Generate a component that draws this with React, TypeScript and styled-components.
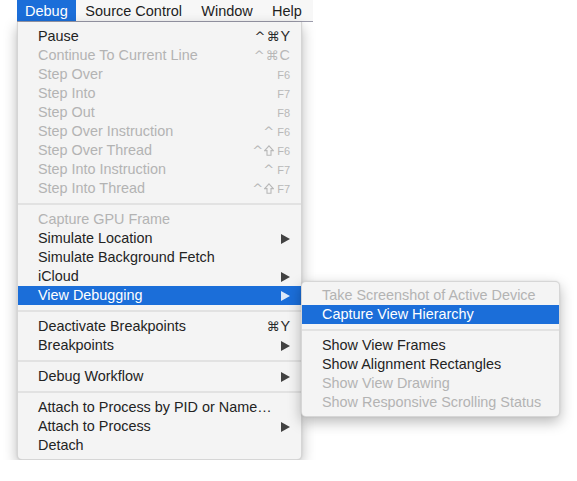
import React from 'react';
import styled, { createGlobalStyle, css } from 'styled-components';

const GlobalStyle = createGlobalStyle`
  html, body {
    margin: 0;
    padding: 0;
    background: #ffffff;
  }
  body {
    font-family: 'Liberation Sans', Arial, sans-serif;
    -webkit-font-smoothing: antialiased;
  }
`;

const Page = styled.div`
  padding-left: 17px;
  width: 560px;
`;

const MenuBar = styled.div`
  display: flex;
  width: 296px;
  height: 22px;
  background: #f7f7f7;
  border-bottom: 1px solid #9c9cac;
  box-sizing: border-box;
`;

const BarItem = styled.div<{ $active?: boolean }>`
  display: flex;
  align-items: center;
  padding: 0 9.6px;
  font-size: 14.5px;
  color: #1e1e1e;
  &:first-child {
    padding: 0 8px;
  }
  ${({ $active }) =>
    $active &&
    css`
      background: #1b6ed9;
      color: #ffffff;
    `}
`;

const Menu = styled.div<{ $attached?: boolean }>`
  position: relative;
  display: flex;
  flex-direction: column;
  background: #f4f4f4;
  padding: 5px 0 4px;
  border: 1px solid rgba(0, 0, 0, 0.12);
  border-radius: ${({ $attached }) => ($attached ? '0 0 5px 5px' : '5px')};
  box-shadow: 0 5px 14px rgba(0, 0, 0, 0.28), 0 0 2px rgba(0, 0, 0, 0.1);
  box-sizing: border-box;
`;

const MainMenu = styled(Menu)`
  width: 285px;
  border-top: none;
`;

const SubMenu = styled(Menu)`
  position: absolute;
  top: -5px;
  left: 100%;
  width: 259px;
  padding: 4px 0;
  z-index: 2;
`;

const Row = styled.div<{ $disabled?: boolean; $selected?: boolean; $indent: number }>`
  position: relative;
  display: flex;
  align-items: center;
  justify-content: space-between;
  height: 19px;
  padding: 0 11px 0 ${({ $indent }) => $indent}px;
  font-size: 14.4px;
  line-height: 19px;
  color: ${({ $disabled }) => ($disabled ? '#b3b3b3' : '#232323')};
  white-space: nowrap;
  ${({ $selected }) =>
    $selected &&
    css`
      background: #1b6ed9;
      color: #ffffff;
    `}
`;

const Separator = styled.div`
  height: 12px;
  display: flex;
  align-items: center;
  &::after {
    content: '';
    flex: 1;
    height: 2px;
    background: #e2e2e2;
  }
`;

const Shortcut = styled.span<{ $disabled?: boolean }>`
  display: flex;
  align-items: center;
  color: ${({ $disabled }) => ($disabled ? '#b8b8b8' : '#2a2a2a')};
  font-size: 14.4px;
`;

const Mods = styled.span`
  font-family: 'DejaVu Sans', 'Liberation Sans', sans-serif;
  font-size: 13px;
  letter-spacing: 1px;
`;

const ShiftIcon = styled.svg`
  width: 10px;
  height: 11px;
  margin: 0 1px 0 0;
  fill: none;
  stroke: currentColor;
  stroke-width: 1.1;
`;

const FKey = styled.span`
  font-size: 11px;
  margin-left: 2px;
  padding-top: 2px;
`;

const Arrow = styled.svg`
  width: 9px;
  height: 10px;
  fill: currentColor;
  opacity: 0.85;
`;

type Item =
  | { sep: true }
  | {
      sep?: false;
      label: string;
      disabled?: boolean;
      selected?: boolean;
      mods?: string;
      shift?: boolean;
      key?: string;
      fkey?: string;
      arrow?: boolean;
      submenu?: Item[];
    };

const subItems: Item[] = [
  { label: 'Take Screenshot of Active Device', disabled: true },
  { label: 'Capture View Hierarchy', selected: true },
  { sep: true },
  { label: 'Show View Frames' },
  { label: 'Show Alignment Rectangles' },
  { label: 'Show View Drawing', disabled: true },
  { label: 'Show Responsive Scrolling Status', disabled: true },
];

const items: Item[] = [
  { label: 'Pause', mods: '^⌘', key: 'Y' },
  { label: 'Continue To Current Line', disabled: true, mods: '^⌘', key: 'C' },
  { label: 'Step Over', disabled: true, fkey: 'F6' },
  { label: 'Step Into', disabled: true, fkey: 'F7' },
  { label: 'Step Out', disabled: true, fkey: 'F8' },
  { label: 'Step Over Instruction', disabled: true, mods: '^ ', fkey: 'F6' },
  { label: 'Step Over Thread', disabled: true, mods: '^', shift: true, fkey: 'F6' },
  { label: 'Step Into Instruction', disabled: true, mods: '^ ', fkey: 'F7' },
  { label: 'Step Into Thread', disabled: true, mods: '^', shift: true, fkey: 'F7' },
  { sep: true },
  { label: 'Capture GPU Frame', disabled: true },
  { label: 'Simulate Location', arrow: true },
  { label: 'Simulate Background Fetch' },
  { label: 'iCloud', arrow: true },
  { label: 'View Debugging', arrow: true, selected: true, submenu: subItems },
  { sep: true },
  { label: 'Deactivate Breakpoints', mods: '⌘', key: 'Y' },
  { label: 'Breakpoints', arrow: true },
  { sep: true },
  { label: 'Debug Workflow', arrow: true },
  { sep: true },
  { label: 'Attach to Process by PID or Name…' },
  { label: 'Attach to Process', arrow: true },
  { label: 'Detach' },
];

const renderRows = (list: Item[], indent: number) =>
  list.map((item, i) => {
    if (item.sep) return <Separator key={i} />;
    const hasShortcut = item.mods || item.key || item.fkey;
    return (
      <Row key={i} $disabled={item.disabled} $selected={item.selected} $indent={indent}>
        <span>{item.label}</span>
        {hasShortcut && (
          <Shortcut $disabled={item.disabled}>
            {item.mods && <Mods>{item.mods}</Mods>}
            {item.shift && (
              <ShiftIcon viewBox="0 0 10 11">
                <path d="M5 0.8 L9.3 5.6 H7 V10.2 H3 V5.6 H0.7 Z" />
              </ShiftIcon>
            )}
            {item.key}
            {item.fkey && <FKey>{item.fkey}</FKey>}
          </Shortcut>
        )}
        {item.arrow && (
          <Arrow viewBox="0 0 9 10">
            <polygon points="0,0 9,5 0,10" />
          </Arrow>
        )}
        {item.submenu && <SubMenu>{renderRows(item.submenu, 20)}</SubMenu>}
      </Row>
    );
  });

export default function App() {
  return (
    <>
      <GlobalStyle />
      <Page>
        <MenuBar>
          <BarItem $active>Debug</BarItem>
          <BarItem>Source Control</BarItem>
          <BarItem>Window</BarItem>
          <BarItem>Help</BarItem>
        </MenuBar>
        <MainMenu $attached>{renderRows(items, 20)}</MainMenu>
      </Page>
    </>
  );
}
